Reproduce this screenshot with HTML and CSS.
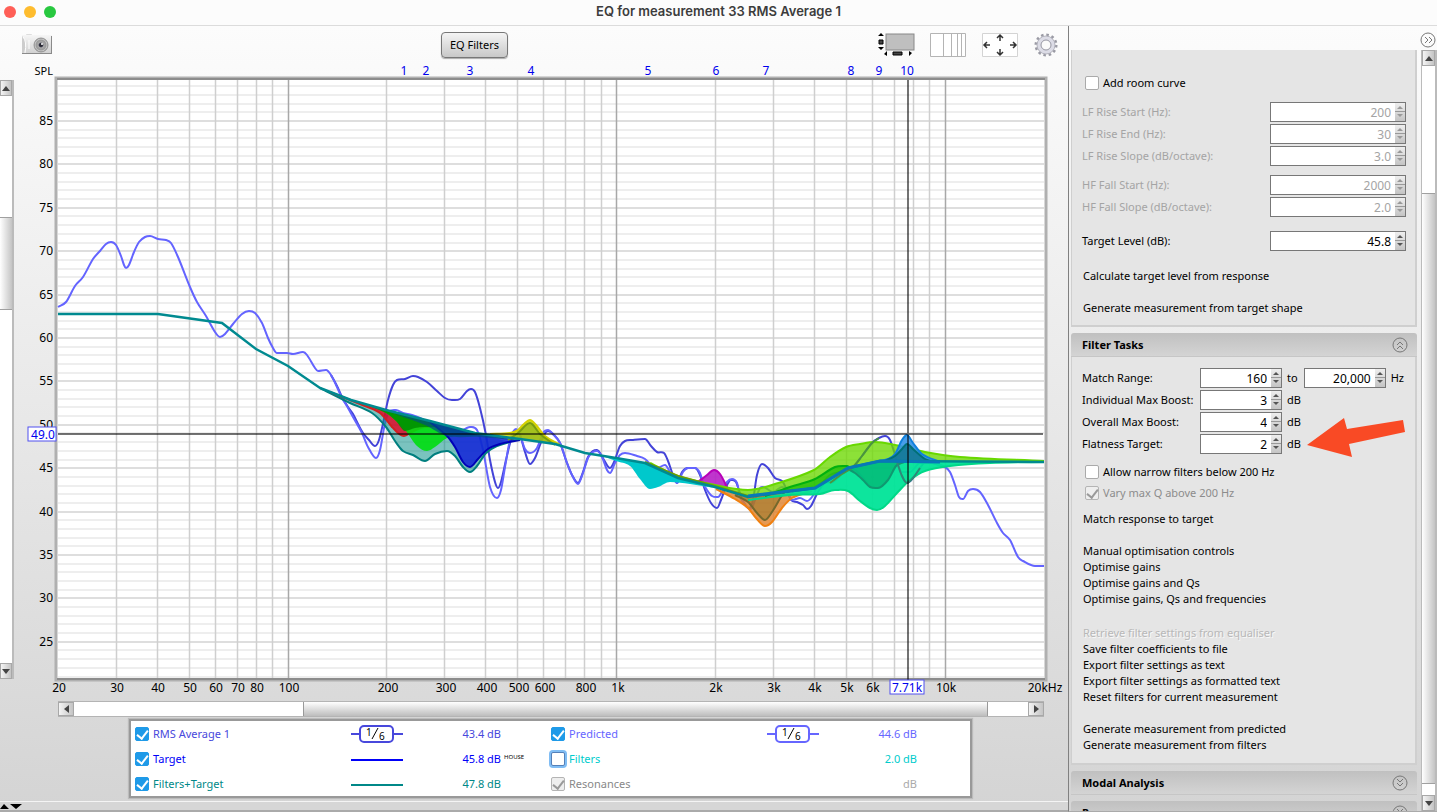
FILE: index.html
```html
<!DOCTYPE html>
<html lang="en">
<head>
<meta charset="utf-8">
<title>EQ for measurement 33 RMS Average 1</title>
<link rel="stylesheet" href="styles.css">
</head>
<body>
<svg class="defs" aria-hidden="true">
  <symbol id="up" viewBox="0 0 8 5"><path d="M4 0L8 5H0z"/></symbol>
  <symbol id="down" viewBox="0 0 8 5"><path d="M0 0H8L4 5z"/></symbol>
  <symbol id="left" viewBox="0 0 5 8"><path d="M5 0V8L0 4z"/></symbol>
  <symbol id="right" viewBox="0 0 5 8"><path d="M0 0V8L5 4z"/></symbol>
  <symbol id="chev-right" viewBox="0 0 16 16"><circle cx="8" cy="8" r="7"/><path class="chev" d="M5 5l3 3-3 3M9 5l3 3-3 3"/></symbol>
  <symbol id="chev-up" viewBox="0 0 16 16"><circle cx="8" cy="8" r="7"/><path class="chev" d="M5 8l3-3 3 3M5 12l3-3 3 3"/></symbol>
  <symbol id="chev-down" viewBox="0 0 16 16"><circle cx="8" cy="8" r="7"/><path class="chev" d="M5 4l3 3 3-3M5 8l3 3 3-3"/></symbol>
</svg>

<header class="titlebar">
  <div class="lights"><button class="light red" aria-label="Close"></button><button class="light amber" aria-label="Minimise"></button><button class="light green" aria-label="Zoom"></button></div>
  <h1>EQ for measurement 33 RMS Average 1</h1>
</header>

<div class="window">
  <main class="main">
    <div class="toolbar">
      <div class="tool-left">
        <button class="icon" aria-label="Capture image">
          <svg width="30" height="22" viewBox="0 0 30 22">
            <defs>
              <linearGradient id="cam" x1="0" y1="0" x2="0" y2="1"><stop offset="0" stop-color="#f6f6f6"/><stop offset="1" stop-color="#cfcfcf"/></linearGradient>
              <radialGradient id="lens"><stop offset="0" stop-color="#222"/><stop offset=".25" stop-color="#334"/><stop offset=".4" stop-color="#aaa"/><stop offset=".7" stop-color="#999"/><stop offset=".85" stop-color="#c8c8c8"/><stop offset="1" stop-color="#888"/></radialGradient>
            </defs>
            <rect x="4" y="1" width="6" height="3" rx="1" fill="#ddd"/>
            <rect x="0" y="2" width="30" height="19" fill="url(#cam)"/>
            <path d="M0 3q4 4 4 9t-4 9z" fill="#cdcdcd"/><path d="M1 4q4 4 2 16M7 7v9" fill="none" stroke="#fff"/>
            <path d="M0 20h30v1H0zM29 3h1v18h-1z" fill="#8a8a8a"/>
            <circle cx="19" cy="12" r="7" fill="url(#lens)"/><circle cx="19" cy="12" r="7" fill="none" stroke="#999"/>
            <circle cx="20" cy="11" r="1" fill="#fff"/>
          </svg>
        </button>
      </div>
      <div class="tool-right">
        <button class="push">EQ Filters</button>
        <div class="icons">
          <button class="icon" aria-label="Scrollbars"><svg width="37" height="24" viewBox="0 0 37 24"><rect x="8" y="1" width="28" height="16" fill="#bfbfbf" stroke="#888"/><path d="M3 0l3 3H0zM0 14h6l-3 3zM9 18v5l-3-2zM31 18l3 2-3 3z"/><path d="M1 7h4v4H1zM15 19h9v3h-9z" fill="#444" stroke="#000"/></svg></button>
          <button class="icon" aria-label="Frequency axis"><svg width="37" height="24" viewBox="0 0 37 24"><path d="M.5.5h35v23H.5zM13.500 0v24M21.500 0v24M27.500 0v24M31.500 0v24" fill="#fff" stroke="#b4b4b4"/></svg></button>
          <button class="icon" aria-label="Limits"><svg width="37" height="24" viewBox="0 0 37 24"><path d="M.5.5h35v23H.5z" fill="#fff" stroke="#d4d4d4"/><path d="M18 8V2M15 5l3-3 3 3M18 16v6M15 19l3 3 3-3M8 12H2M5 9l-3 3 3 3M28 12h6M31 9l3 3-3 3" fill="none" stroke="#333" stroke-width="1.500"/></svg></button>
          <button class="icon" aria-label="Controls"><svg width="24" height="24" viewBox="0 0 24 24"><circle cx="12" cy="12" r="10" fill="none" stroke="#9a9aa4" stroke-width="3" stroke-dasharray="2.500 2.736"/><circle cx="12" cy="12" r="7" fill="#fafafa" stroke="#dcdce6" stroke-width="4"/><circle cx="12" cy="12" r="5" fill="#fafafa" stroke="#9696a2"/><circle cx="12" cy="12" r="9" fill="none" stroke="#b4b4be" stroke-width="1"/></svg></button>
        </div>
      </div>
    </div>

    <div class="graph-row">
      <div class="vscroll left-scroll">
        <button aria-label="Scroll up"><svg width="8" height="5"><use href="#up"/></svg></button>
        <div class="track"><div class="thumb left-thumb"></div></div>
        <button aria-label="Scroll down"><svg width="8" height="5"><use href="#down"/></svg></button>
      </div>
      <svg class="chart" id="chart" viewBox="14 62 1054 637" role="img" aria-label="SPL against frequency"></svg>
    </div>

    <div class="hscroll">
      <button aria-label="Scroll left"><svg width="5" height="8"><use href="#left"/></svg></button>
      <div class="htrack"><div class="hthumb"></div></div>
      <button aria-label="Scroll right"><svg width="5" height="8"><use href="#right"/></svg></button>
    </div>

    <section class="legend" aria-label="Traces">
      <div class="trace c-avg"><label><input type="checkbox" checked>RMS Average 1</label>
        <svg class="key" width="52" height="20" viewBox="0 0 52 20"><path d="M0 10h9M43 10h9"/><rect x="9" y="2" width="33" height="16" rx="4"/><path class="slash" d="M21 15l6-11"/><text x="15" y="12">1</text><text x="28" y="16">6</text></svg>
        <output>43.4 dB</output><small></small></div>
      <div class="trace c-pred"><label><input type="checkbox" checked>Predicted</label>
        <svg class="key" width="52" height="20" viewBox="0 0 52 20"><path d="M0 10h9M43 10h9"/><rect x="9" y="2" width="33" height="16" rx="4"/><path class="slash" d="M21 15l6-11"/><text x="15" y="12">1</text><text x="28" y="16">6</text></svg>
        <output>44.6 dB</output><small></small></div>
      <div class="trace c-target"><label><input type="checkbox" checked>Target</label>
        <svg class="key" width="52" height="20" viewBox="0 0 52 20"><path d="M0 11h52"/></svg>
        <output>45.8 dB</output><small>HOUSE</small></div>
      <div class="trace c-filters"><label><input type="checkbox" class="focused">Filters</label><span></span><output>2.0 dB</output><small></small></div>
      <div class="trace c-sum"><label><input type="checkbox" checked>Filters+Target</label>
        <svg class="key" width="52" height="20" viewBox="0 0 52 20"><path d="M0 11h52"/></svg>
        <output>47.8 dB</output><small></small></div>
      <div class="trace c-off"><label><input type="checkbox" checked disabled>Resonances</label><span></span><output>dB</output><small></small></div>
    </section>

    <div class="splitter"><svg width="22" height="7" viewBox="0 0 22 7"><path d="M0 6L4 1l5 5zM10 1h12l-6 5z"/></svg></div>
  </main>

  <aside class="side">
    <div class="side-top"><button class="round" aria-label="Hide panel"><svg width="16" height="16"><use href="#chev-right"/></svg></button></div>
    <div class="side-body">
      <div class="panels">
        <section class="panel target-panel">
          <label class="check"><input type="checkbox">Add room curve</label>
          <div class="rows wide off">
            <div class="row"><label for="lfs">LF Rise Start (Hz):</label><span class="spin"><input id="lfs" value="200" disabled></span></div>
            <div class="row"><label for="lfe">LF Rise End (Hz):</label><span class="spin"><input id="lfe" value="30" disabled></span></div>
            <div class="row"><label for="lfo">LF Rise Slope (dB/octave):</label><span class="spin"><input id="lfo" value="3.0" disabled></span></div>
          </div>
          <div class="rows wide off hf">
            <div class="row"><label for="hfs">HF Fall Start (Hz):</label><span class="spin"><input id="hfs" value="2000" disabled></span></div>
            <div class="row"><label for="hfo">HF Fall Slope (dB/octave):</label><span class="spin"><input id="hfo" value="2.0" disabled></span></div>
          </div>
          <div class="rows wide level">
            <div class="row"><label for="lvl">Target Level (dB):</label><span class="spin"><input id="lvl" value="45.8"></span></div>
          </div>
          <div class="actions apart"><button>Calculate target level from response</button><button>Generate measurement from target shape</button></div>
        </section>

        <section class="group">
          <h2><span>Filter Tasks</span><button class="round" aria-label="Collapse"><svg width="16" height="16"><use href="#chev-up"/></svg></button></h2>
          <div class="panel tasks">
            <div class="rows">
              <div class="row"><label for="lo">Match Range:</label><span class="spin"><input id="lo" value="160"></span><label class="to" for="hi">to</label><span class="spin"><input id="hi" value="20,000"></span><span>Hz</span></div>
              <div class="row"><label for="imb">Individual Max Boost:</label><span class="spin"><input id="imb" value="3"></span><span>dB</span></div>
              <div class="row"><label for="omb">Overall Max Boost:</label><span class="spin"><input id="omb" value="4"></span><span>dB</span></div>
              <div class="row flat"><label for="ft">Flatness Target:</label><span class="spin"><input id="ft" value="2"></span><span>dB</span>
                <svg class="pointer" width="100" height="40" viewBox="0 0 100 40"><path d="M1 27L38 0l3 11 56-9 2 12-56 12 3 13z"/></svg></div>
            </div>
            <label class="check narrow"><input type="checkbox">Allow narrow filters below 200 Hz</label>
            <label class="check grey"><input type="checkbox" checked disabled>Vary max Q above 200 Hz</label>
            <div class="actions"><button>Match response to target</button></div>
            <div class="actions"><button>Manual optimisation controls</button><button>Optimise gains</button><button>Optimise gains and Qs</button><button>Optimise gains, Qs and frequencies</button></div>
            <div class="actions"><button disabled>Retrieve filter settings from equaliser</button><button>Save filter coefficients to file</button><button>Export filter settings as text</button><button>Export filter settings as formatted text</button><button>Reset filters for current measurement</button></div>
            <div class="actions"><button>Generate measurement from predicted</button><button>Generate measurement from filters</button></div>
          </div>
        </section>
        <section class="group"><h2><span>Modal Analysis</span><button class="round" aria-label="Expand"><svg width="16" height="16"><use href="#chev-down"/></svg></button></h2></section>
        <section class="group"><h2><span>Resonances</span><button class="round" aria-label="Expand"><svg width="16" height="16"><use href="#chev-down"/></svg></button></h2></section>
      </div>
      <div class="vscroll right-scroll">
        <button aria-label="Scroll up"><svg width="8" height="5"><use href="#up"/></svg></button>
        <div class="track"><div class="thumb right-thumb"></div></div>
        <button aria-label="Scroll down"><svg width="8" height="5"><use href="#down"/></svg></button>
      </div>
    </div>
  </aside>
</div>
<script src="chart.js"></script>
</body>
</html>
```
FILE: styles.css
```css
* { box-sizing: border-box; }
body {
  margin: 0;
  height: 100vh;
  display: flex;
  flex-direction: column;
  overflow: hidden;
  background: #d6d6d6;
  color: #000;
  font: 11px/16px "Noto Sans", "DejaVu Sans", sans-serif;
}
button, input { font: inherit; color: inherit; }
button { padding: 0; border: 0; background: none; }
svg { display: block; flex: none; }
.defs { position: absolute; width: 0; height: 0; }

.titlebar {
  flex: none;
  position: relative;
  height: 26px;
  padding-bottom: 3px;
  display: flex;
  align-items: center;
  justify-content: center;
  background: #fcfcfc;
  border-bottom: 1px solid #dcdcdc;
}
.titlebar h1 { margin: 0; font: 600 13px/16px Inter, sans-serif; color: #3c3c3c; }
.lights { position: absolute; left: 4px; top: 6px; display: flex; gap: 8px; }
.light { width: 12px; height: 12px; border-radius: 50%; }
.red { background: #ff5f57; }
.amber { background: #febc2e; }
.green { background: #28c840; }

.window {
  flex: 1;
  min-height: 0;
  display: flex;
  background: linear-gradient(#fcfcfc, #fafafa 5%, #d4d4d4);
}
.main { flex: 1; min-width: 0; display: flex; flex-direction: column; }

.toolbar { flex: none; height: 36px; display: grid; grid-template-columns: 441fr 627fr; align-items: center; }
.tool-left { padding: 4px 0 0 22px; }
.tool-right { display: flex; justify-content: space-between; align-items: center; padding-right: 10px; }
.icons { display: flex; gap: 15px; padding-top: 2px; }
.push {
  height: 26px;
  margin-top: 2px;
  padding: 0 8px;
  border: 1px solid #777;
  border-radius: 4px;
  background: linear-gradient(#f4f4f4, #c8c8c8);
  box-shadow: 0 1px 1px #aaa;
  font-size: 11px;
}

.graph-row { flex: 1; min-height: 0; display: flex; }
.chart { flex: 1; min-width: 0; height: 100%; }
.vscroll { display: flex; flex-direction: column; width: 15px; background: #fff; border-right: 2px solid #bbb; }
.vscroll button, .hscroll button {
  flex: none;
  display: flex;
  align-items: center;
  justify-content: center;
  border: 1px solid #a8a8a8;
  background: linear-gradient(90deg, #f4f4f4, #c4c4c4);
  fill: #444;
}
.vscroll button { height: 16px; }
.left-scroll { width: 14px; margin: 18px 0 20px; }
.track { flex: 1; display: flex; flex-direction: column; }
.thumb { border: solid #a0a0a0; border-width: 1px 0; background: linear-gradient(90deg, #fff, #c4c4c4); }
.left-thumb { margin-top: 121px; height: 93px; }
.right-thumb { margin-top: 127px; flex: 1; margin-bottom: 11px; }

.hscroll { flex: none; display: flex; height: 16px; margin: 2px 24px 2px 58px; background: #fff; border: solid #b4b4b4; border-width: 1px 0; }
.hscroll button { width: 16px; }
.htrack { flex: 1; display: grid; grid-template-columns: 229fr 685fr 40fr; }
.hthumb { grid-column: 2; border: solid #999; border-width: 0 1px; background: linear-gradient(#fff, #bdbdbd); }

.legend {
  flex: none;
  margin: 0 96px 3px 129px;
  padding: 0 53px 0 4px;
  display: grid;
  grid-template-columns: 416fr 366fr;
  border: 2px solid #999;
  background: #fff;
  box-shadow: 0 0 1px 1px #bbb;
}
.trace { height: 25px; display: grid; grid-template-columns: 1fr 52px 98px 50px; align-items: center; }
.trace:nth-child(even) { grid-template-columns: 1fr 52px 98px; }
.trace:nth-child(even) small { display: none; }
.trace label { display: flex; align-items: center; gap: 4px; }
.trace output { text-align: right; }
.trace small { font-size: 6px; line-height: 8px; color: #000; padding: 0 0 4px 3px; }
.key path, .key rect { fill: none; stroke: currentColor; stroke-width: 2; }
.key .slash { stroke: #000; stroke-width: 1; }
.key text { font-size: 10px; fill: #000; }
.c-avg { color: #4848dc; }
.c-pred { color: #6666ff; }
.c-target { color: #0000f8; }
.c-filters { color: #00cccc; }
.c-sum { color: #008888; }
.c-off { color: #888; }
.c-off output { color: #aaa; }

input[type="checkbox"] {
  appearance: none;
  flex: none;
  margin: 0;
  width: 14px;
  height: 14px;
  display: grid;
  place-items: center;
  border: 1px solid #aaa;
  border-radius: 2px;
  background: #fff;
}
input[type="checkbox"]:checked { background: #1f9ae8; border-color: #1f9ae8; }
input[type="checkbox"]:checked::after {
  content: "";
  width: 5px;
  height: 9px;
  margin-bottom: 2px;
  border: solid #fff;
  border-width: 0 2px 2px 0;
  transform: rotate(38deg);
}
input[type="checkbox"]:disabled { background: #eee; border-color: #b4b4b4; }
input[type="checkbox"]:disabled::after { border-color: #999; }
input.focused { border-color: #5580b8; box-shadow: 0 0 0 2px #80bdf4; }

.splitter { flex: none; height: 11px; border-top: 1px solid #f4f4f4; border-bottom: 2px solid #aaa; padding-top: 1px; background: #d6d6d6; }

.side { flex: none; width: 369px; display: flex; flex-direction: column; border-left: 1px solid #808080; border-bottom: 1px solid #aaa; }
.side-top { flex: none; height: 24px; display: flex; justify-content: flex-end; padding: 4px 1px 0 0; }
.round svg { fill: none; stroke: #777; }
.round .chev { stroke: #111; stroke-width: 1.5; }
.side-body { flex: 1; min-height: 0; display: flex; gap: 4px; padding-left: 2px; }
.panels { flex: 1; display: flex; flex-direction: column; gap: 6px; overflow: hidden; }
.right-scroll { width: 16px; border-left: 1px solid #bbb; }
.panel { flex: none; background: #e5e5e5; border: solid #cfcfcf; border-width: 0 2px 2px 1px; padding: 0 9px 0 10px; }
.target-panel { height: 277px; padding-top: 25px; }
.group { flex: none; }
.group h2 {
  margin: 0;
  height: 24px;
  padding: 0 9px 0 11px;
  display: flex;
  align-items: center;
  justify-content: space-between;
  font-size: 11px;
  line-height: 16px;
  background: linear-gradient(#c0c0c0, #d4d4d4);
  border-bottom: 1px solid #c6c6c6;
  border-radius: 3px 3px 0 0;
}
.check { display: flex; align-items: center; gap: 4px; height: 16px; padding-left: 3px; }
.rows { padding-top: 10px; }
.hf { padding-top: 7px; }
.level { padding-top: 12px; }
.row { display: grid; grid-template-columns: 118px 82px auto 82px 1fr; height: 22px; align-items: center; white-space: nowrap; }
.row > span:not(.spin), .to { margin-left: 5px; }
.to { margin-right: 6px; }
.wide .row { grid-template-columns: 1fr 136px; }
.off, .c-off label { color: #a4a4a4; }
.c-off label { color: #888; }
.spin {
  display: block;
  height: 20px;
  padding-right: 11px;
  border: 1px solid #777;
  background:
    linear-gradient(#999, #999) right 8px / 10px 1px no-repeat,
    linear-gradient(#eee, #c4c4c4) right / 10px 100% no-repeat,
    #fff;
  position: relative;
}
.spin::before, .spin::after { content: ""; position: absolute; right: 2px; border: solid transparent; border-width: 0 3px; }
.spin::before { top: 3px; border-bottom: 3px solid #555; }
.spin::after { bottom: 4px; border-top: 3px solid #555; }
.off .spin::before { border-bottom-color: #999; }
.off .spin::after { border-top-color: #999; }
.spin input { display: block; width: 100%; height: 18px; padding: 0 3px 0 0; border: 0; background: transparent; text-align: right; font-size: 12px; }
.actions { display: flex; flex-direction: column; align-items: flex-start; padding-left: 1px; margin-bottom: 16px; }
.actions button { height: 16px; line-height: 16px; }
.actions button:disabled { height: 17px; margin-top: 1px; color: #b8b8b8; text-shadow: 1px 1px #f8f8f8; }
.apart { gap: 16px; padding-top: 16px; }
.tasks { padding-top: 10px; }
.tasks .rows { padding-top: 0; }
.tasks .actions:last-child { margin-bottom: 10px; }
.narrow { margin-top: 9px; }
.check.grey { margin: 5px 0 10px; color: #8c8c8c; }
.flat { position: relative; }
.pointer { position: absolute; left: 224px; top: -15px; fill: #f94a25; }

.chart text { font-size: 12px; }
.chart .title { font-size: 11px; text-anchor: end; }
.chart .slot { fill: #0000ee; text-anchor: middle; }
.chart .tick { text-anchor: middle; }
.chart .ytick { text-anchor: end; }
.chart .cursor { fill: #0000ee; text-anchor: middle; }
```
FILE: chart.js
```js
const NS = 'http://www.w3.org/2000/svg';
const chart = document.getElementById('chart');

function add(tag, attrs, text) {
  const el = document.createElementNS(NS, tag);
  for (const k in attrs) el.setAttribute(k, attrs[k]);
  if (text !== undefined) el.textContent = text;
  chart.appendChild(el);
  return el;
}
const nums = s => s.trim().split(/\s+/).map(p => p.split(',').map(Number));

// Cubic segments through every point, tangents clamped to stay monotone.
function smooth(pts) {
  const n = pts.length, m = [];
  for (let i = 0; i < n; i++) {
    const a = pts[Math.max(i - 1, 0)], b = pts[i], c = pts[Math.min(i + 1, n - 1)];
    const rising = (b[1] - a[1]) * (c[1] - b[1]);
    m.push(i > 0 && i < n - 1 && rising <= 0 ? 0 : (c[1] - a[1]) / (c[0] - a[0] || 1));
  }
  let d = '';
  for (let i = 1; i < n; i++) {
    const p = pts[i - 1], q = pts[i], h = (q[0] - p[0]) / 3;
    d += `C${p[0] + h},${p[1] + h * m[i - 1]} ${q[0] - h},${q[1] - h * m[i]} ${q[0]},${q[1]}`;
  }
  return d;
}
const line = (s, color, width) => {
  const p = nums(s);
  add('path', { d: 'M' + p[0] + smooth(p), fill: 'none', stroke: color, 'stroke-width': width });
};

const target = nums('58,314 158,314 222,323 256,349 288,366 320,388 351,400 386,410 430,421 475,433 520,439 555,444 585,453 616,458 645,463 678,478 715,487 748,497 815,488 848,468 880,461 1044,462');
// Closed area between the target line and a filter response.
function area(s, fill, opacity, stroke) {
  const p = nums(s), x0 = p[0][0], x1 = p[p.length - 1][0];
  const back = target.filter(t => t[0] > x0 && t[0] < x1).reverse();
  add('path', { d: 'M' + p[0] + smooth(p) + back.map(t => 'L' + t).join('') + 'Z', fill, 'fill-opacity': opacity });
  if (stroke) add('path', { d: 'M' + p[0] + smooth(p), fill: 'none', stroke, 'stroke-width': 2 });
}

// Frame and grid
add('rect', { x: 56, y: 78, width: 990, height: 602, fill: '#fff', stroke: '#b0b0b0', 'stroke-width': 3 });
const fx = f => 288 + 328.5 * Math.log10(f / 100);
const dy = v => Math.round(121 + (85 - v) * 8.68);
for (let v = 89; v > 20; v--) add('path', { d: `M58 ${dy(v)}H1044`, stroke: v % 5 ? '#eeeeee' : '#dedede', 'stroke-width': 2 });
for (const dec of [10, 100, 1000, 10000])
  for (let k = 1; k < 10; k++) {
    const f = dec * k, x = Math.floor(fx(f)) + 0.5;
    if (f > 20 && f < 20000) add('path', { d: `M${x} 80V678`, stroke: k === 1 ? '#a8a8a8' : '#cfcfcf', 'stroke-width': 1.5 });
  }
add('path', { d: 'M57 79H1045M57 679H1045', stroke: '#8c8c8c', 'stroke-width': 2 });

// Measured and predicted responses
line('331,375 337,386 342,397 348,407 353,414 358,424 363,433 369,440 375,446 379,440 384,419 388,400 393,385 397,380 405,379 413,376 418,377 427,382 437,391 445,398 452,400 460,399 467,391 471,389 475,392 480,408 486,435 490,460 495,482 498,488 501,482 506,460 511,440 516,430 520,435 525,452 530,464 535,458 540,445 544,435 548,431 553,434 560,443 567,463 572,475 578,483 583,472 588,457 593,451 597,450 604,460 610,468 614,462 620,446 625,441 632,440 645,439 651,446 657,452 664,453 668,461 673,475 677,483 682,472 688,468 695,468 700,475 705,490 711,503 717,508 721,500 726,487 731,480 736,482 742,499 749,508 753,500 757,475 762,464 768,468 775,478 782,481 786,488 791,500 797,502 803,505 807,509 811,506 818,492 825,483 833,482 842,474 853,467 862,456 872,443 879,438 885,436 890,440 896,458 902,476 907,483 913,478 920,468 926,462 945,467', '#4343d8', 2);
line('58,307 66,302 75,286 83,277 93,259 100,251 106,244 111,242 116,245 121,256 124,265 126,268 129,265 134,252 139,242 145,237 150,236 158,239 166,240 171,243 178,257 190,287 197,302 206,316 215,332 220,337 225,334 233,324 242,314 249,311 255,313 262,323 268,338 273,348 277,353 287,353 293,354 303,352 307,355 315,368 318,371 326,370 331,375 337,387 342,398 348,408 353,417 362,433 368,447 376,458 380,450 385,423 389,412 396,410 403,413 412,415 420,418 437,427 453,435 460,432 470,427 477,430 483,450 490,487 497,498 501,490 505,467 510,440 516,429 520,435 525,449 530,453 537,448 543,433 548,430 553,434 560,443 567,463 572,475 578,484 583,473 588,458 593,452 597,451 602,457 607,470 610,473 615,463 620,455 625,453 637,456 645,459 653,467 657,468 665,465 670,472 677,483 683,472 688,468 695,468 700,473 703,483 707,490 712,496 718,497 723,490 727,482 732,479 737,483 740,497 747,507 751,509 755,500 760,488 763,487 773,492 782,487 787,490 792,500 800,498 807,501 812,497 817,488 822,483 830,475 840,472 853,469 863,478 870,486 877,488 885,483 893,472 897,465 902,472 910,472 920,463 933,463 945,467 950,472 955,485 959,497 963,499 968,491 973,489 980,492 988,505 997,523 1003,533 1010,540 1018,557 1023,561 1035,566 1044,566', '#6464ff', 2);

// Filter responses
area('320,388 350,403 372,413 386,427 395,441 403,451 413,455 425,461 435,454 447,451 455,456 463,467 470,472 477,466 486,453 497,446 510,442', '#008c84', .52, '#007f7f');
area('330,392 360,404 380,413 392,427 398,433 404,436 412,432 425,427 445,427', '#e60020', .8, '#d02020');
area('330,392 360,403 386,413 405,430 417,446 427,451 435,447 447,438 460,436 480,436', '#00de10', .9);
area('330,392 360,403 386,413 396,421 405,431 415,428 425,427 437,427 447,432 475,435', '#009000', .9);
area('430,422 447,436 455,447 463,462 470,467 478,459 488,449 500,444 520,440', '#1020d8', .84, '#0000b8');
area('395,414 425,425 447,436 480,437 520,441', '#005080', .7);
area('490,434 510,433 518,430 524,424 530,420 536,425 545,436 560,445', '#c8d400', .85, '#d4d000');
area('508,440 518,433 530,423 540,434 555,445', '#78a818', .5, '#789c10');
area('605,457 616,461 630,466 640,479 650,489 658,487 670,482 690,484 715,488', '#00c8cc', 1);
area('698,482 707,475 714,470 720,474 728,489', '#b820c8', .9, '#b800b8');
area('716,489 735,499 748,508 756,518 765,526 772,522 782,508 792,498 812,491', '#e08028', .8, '#f08010');
area('735,495 748,502 757,513 765,520 772,512 785,492 800,490', '#806c20', .45, '#74682c');
area('748,500 790,495 820,494 835,490 848,491 860,501 870,508 877,510 885,506 897,493 910,480 925,471 950,466 990,463 1044,462', '#00e498', .95, '#00d888');
area('650,463 678,476 715,485 748,490 775,484 814,470 830,457 846,447 860,444 875,442 895,445 925,452 960,457 1044,461', '#6cd800', .78, '#68d800');
area('765,496 790,487 815,479 835,467 847,466 850,468', '#00b400', .6, '#00b010');
area('848,469 855,473 863,480 870,487 878,488 888,480 896,466 904,462', '#00a868', .6, '#109870');
line('830,483 842,474 853,467 862,456 872,443 879,438', '#4a9440', 2);
line('896,459 902,476 907,483 913,478 920,468', '#308878', 2);
area('880,461 888,459 895,454 902,440 907,435 913,443 922,454 940,462', '#3494e8', .9, '#1080dc');
area('885,461 895,456 902,449 907,444 914,450 925,459 935,462', '#006878', .6, '#007078');

add('path', { d: 'M645 462L678 476L715 486L748 496', fill: 'none', stroke: '#709c00', 'stroke-width': 2 });
add('path', { d: 'M' + target.join('L'), fill: 'none', stroke: '#008a90', 'stroke-width': 2.5 });
add('path', { d: 'M748 496L815 488L848 468L880 461L940 462', fill: 'none', stroke: '#0878b8', 'stroke-width': 3 });

// Crosshair
add('path', { d: 'M58 434H1043M908 80V680', stroke: '#000', 'stroke-opacity': .55, 'stroke-width': 2 });

// Axis captions
add('text', { x: 53, y: 75, class: 'title' }, 'SPL');
for (let v = 85; v > 20; v -= 5) add('text', { x: 53, y: dy(v) + 4, class: 'ytick' }, v);
const slots = [404, 426, 470, 531, 648, 716, 766, 851, 879, 907];
slots.forEach((x, i) => add('text', { x, y: 75, class: 'slot' }, i + 1));
const ticks = { 20: '20', 30: '30', 40: '40', 50: '50', 60: '60', 70: '70', 80: '80', 100: '100', 200: '200', 300: '300', 400: '400', 500: '500', 600: '600', 800: '800', 1000: '1k', 2000: '2k', 3000: '3k', 4000: '4k', 5000: '5k', 6000: '6k', 10000: '10k', 20000: '20kHz' };
for (const f in ticks) add('text', { x: Math.round(fx(+f)) + 1, y: 692, class: 'tick' }, ticks[f]);
add('rect', { x: 28, y: 427, width: 28, height: 14, fill: '#fff', stroke: '#5050f0' });
add('text', { x: 43, y: 439, class: 'cursor' }, '49.0');
add('rect', { x: 890, y: 680, width: 34, height: 14, fill: '#fff', stroke: '#5050f0' });
add('text', { x: 907, y: 692, class: 'cursor' }, '7.71k');
```
